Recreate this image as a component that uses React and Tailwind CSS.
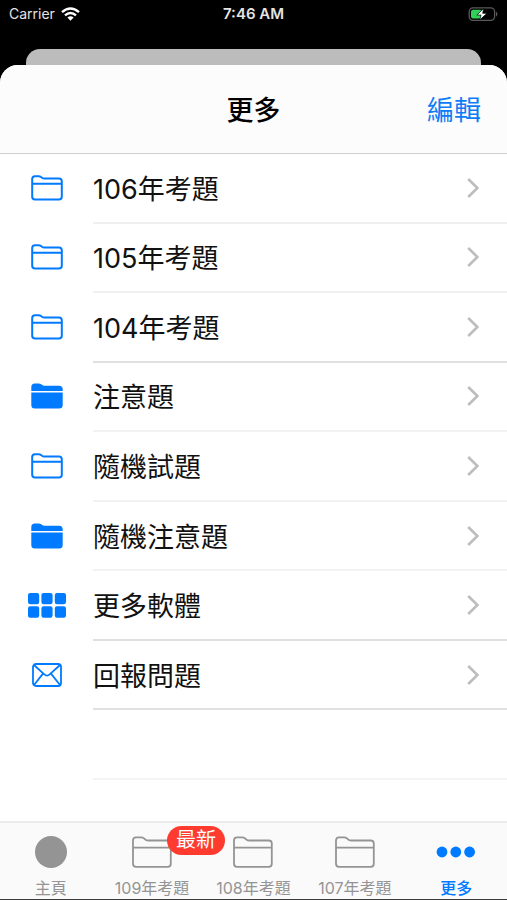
import React, { useState } from 'react';

const items = [
  { label: '106年考題', icon: 'folder', line: 'border-[#f0f0f0]' },
  { label: '105年考題', icon: 'folder', line: 'border-[#f0f0f0]' },
  { label: '104年考題', icon: 'folder', line: 'border-[#e0e0e0]' },
  { label: '注意題', icon: 'filled', line: 'border-[#f2f2f2]' },
  { label: '隨機試題', icon: 'folder', line: 'border-[#f2f2f2]' },
  { label: '隨機注意題', icon: 'filled', line: 'border-[#f2f2f2]' },
  { label: '更多軟體', icon: 'grid', line: 'border-[#e0e0e0]' },
  { label: '回報問題', icon: 'mail', line: 'border-[#e0e0e0]' },
];

const tabs = [
  { label: '主頁', icon: 'circle' },
  { label: '109年考題', icon: 'folder', badge: '最新' },
  { label: '108年考題', icon: 'folder' },
  { label: '107年考題', icon: 'folder' },
  { label: '更多', icon: 'dots' },
];

function FolderIcon({ className }) {
  return (
    <svg viewBox="0 0 32 26" fill="none" stroke="currentColor" strokeWidth="2" strokeLinejoin="round" className={className}>
      <path d="M1.2 8.8V4Q1.2 1.2 4 1.2H7.6Q9 1.2 10 2L11 2.8Q12 3.5 13.2 3.5H28Q30.8 3.5 30.8 6.3V21.8Q30.8 24.6 28 24.6H4Q1.2 24.6 1.2 21.8V8.8H30.8" />
    </svg>
  );
}

function FilledFolderIcon({ className }) {
  return (
    <svg viewBox="0 0 32 26" fill="currentColor" className={className}>
      <path d="M.3 8V4Q.3.5 3.8.5H7.6Q9.2.5 10.2 1.3L11.2 2.1Q12 2.7 13.2 2.7H28.2Q31.6 2.7 31.7 6.2V8Z" />
      <path d="M.3 9.4H31.7V22Q31.7 25.5 28.2 25.5H3.8Q.3 25.5.3 22Z" />
    </svg>
  );
}

function TabFolderIcon() {
  return (
    <svg viewBox="0 0 40 32" fill="none" stroke="currentColor" strokeWidth="1.8" strokeLinejoin="round" className="h-8 w-10">
      <path d="M1 11.6V4.4Q1 1.4 4 1.4H9Q10.8 1.4 12 2.4L13.6 3.7Q14.8 4.5 16.4 4.5H35.8Q38.8 4.5 38.8 7.5V27.8Q38.8 30.8 35.8 30.8H4Q1 30.8 1 27.8V11.6H38.8" />
    </svg>
  );
}

function GridIcon() {
  return (
    <svg viewBox="0 0 38 26" fill="currentColor" className="h-[26px] w-[38px]">
      {[0, 13.4, 26.8].map((x) => (
        <React.Fragment key={x}>
          <rect x={x} y="0.9" width="11.2" height="11.4" rx="2.2" />
          <rect x={x} y="14.3" width="11.2" height="11.4" rx="2.2" />
        </React.Fragment>
      ))}
    </svg>
  );
}

function MailIcon() {
  return (
    <svg viewBox="0 0 30 24" fill="none" stroke="currentColor" strokeWidth="1.8" className="h-6 w-[30px]">
      <rect x="1" y="1" width="28" height="22" rx="3" />
      <path d="M2 2L12.3 11.4Q15 13.8 17.7 11.4L28 2M2 22L11 10.6M28 22L19 10.6" />
    </svg>
  );
}

function RowIcon({ type }) {
  if (type === 'filled') return <FilledFolderIcon className="h-[26px] w-8" />;
  if (type === 'grid') return <GridIcon />;
  if (type === 'mail') return <MailIcon />;
  return <FolderIcon className="h-[26px] w-8" />;
}

function TabIcon({ type }) {
  if (type === 'circle') return <span className="size-8 rounded-full bg-[#949494]" />;
  if (type === 'dots') {
    return (
      <svg viewBox="0 0 40 32" fill="currentColor" className="h-8 w-10">
        <circle cx="6" cy="16" r="5.4" />
        <circle cx="19.8" cy="16" r="5.4" />
        <circle cx="33.6" cy="16" r="5.4" />
      </svg>
    );
  }
  return <TabFolderIcon />;
}

function StatusBar() {
  return (
    <div className="grid h-7 grid-cols-3 items-center px-[9px] font-['Inter','Liberation_Sans',sans-serif] leading-5 text-[#e4e4e4]">
      <div className="flex items-center gap-1.5 text-[14px]">
        <span>Carrier</span>
        <svg viewBox="0 0 19 14" fill="none" stroke="#fff" strokeWidth="2.4" className="h-3.5 w-[19px]">
          <path d="M1 5.2Q9.5-2.4 18 5.2" />
          <path d="M4 8.4Q9.5 3.6 15 8.4" />
          <path d="M6.4 10.6Q9.5 8 12.6 10.6L9.5 13.8Z" fill="#fff" stroke="none" />
        </svg>
      </div>
      <span className="text-center text-[15px] font-semibold">7:46 AM</span>
      <svg viewBox="0 0 30 15" className="h-[15px] w-[30px] justify-self-end">
        <rect x="1.2" y="0.8" width="25.4" height="12.6" rx="3.8" fill="none" stroke="#5a5a5a" strokeWidth="1.3" />
        <path d="M28 4.4Q31 7.1 28 9.8Z" fill="#5a5a5a" />
        <rect x="3" y="2.7" width="11" height="8.8" rx="2" fill="#30d158" />
        <path d="M15.8 1.4L8.8 8H13L11.8 12.8L19 6.3H14.7Z" fill="#fff" stroke="#000" strokeWidth="0.7" />
      </svg>
    </div>
  );
}

export default function App() {
  const [active, setActive] = useState('更多');

  return (
    <div className="flex min-h-screen flex-col bg-black font-['Inter','Noto_Sans_CJK_TC',sans-serif]">
      <StatusBar />
      {/* Card behind the sheet */}
      <div className="mx-[26px] mt-[21px] h-4 rounded-t-[14px] bg-[#bcbcbc]" />

      <div className="flex flex-1 flex-col overflow-hidden rounded-t-[18px] bg-white">
        <header className="grid h-[89px] grid-cols-3 items-center border-b border-[#cfcfcf] bg-[#fcfcfc] px-[26px] pt-1">
          <h1 className="col-start-2 text-center text-[27px] leading-9 font-medium text-black">更多</h1>
          <button className="justify-self-end text-[27px] leading-9 text-[#0f7cf5]">編輯</button>
        </header>

        <ul className="grid flex-1 auto-rows-fr pb-[41px]">
          {items.map((item) => (
            <li key={item.label} className="flex">
              <button className="flex flex-1 text-left">
                <span className="flex w-[93px] items-center justify-center self-stretch pb-0.5 text-[#007aff]">
                  <RowIcon type={item.icon} />
                </span>
                <span className={`flex flex-1 items-center justify-between self-stretch border-b-2 pr-7 ${item.line}`}>
                  <span className="pt-1 text-[27px] leading-9 text-[#111]">{item.label}</span>
                  <svg viewBox="0 0 12 20" fill="none" stroke="#bdbdbd" strokeWidth="2.6" className="h-5 w-3">
                    <path d="M1.2 1L10.4 10L1.2 19" />
                  </svg>
                </span>
              </button>
            </li>
          ))}
          <li className="ml-[93px] border-b-2 border-[#f4f4f4]" />
        </ul>

        <nav className="grid grid-cols-5 border-t-2 border-b border-t-[#ececec] border-b-[#3a3a3a] bg-[#fafafa] pt-[13px] pb-px">
          {tabs.map((tab) => (
            <button
              key={tab.label}
              onClick={() => setActive(tab.label)}
              className={`flex flex-col items-center gap-2.5 ${active === tab.label ? 'font-medium text-[#007aff]' : 'text-[#949494]'}`}
            >
              <span className="relative flex">
                <TabIcon type={tab.icon} />
                {tab.badge && (
                  <span className="absolute -top-2.5 left-[35px] rounded-full bg-[#ff3b30] px-[9px] text-[20px] leading-[29px] whitespace-nowrap text-white">
                    {tab.badge}
                  </span>
                )}
              </span>
              <span className="text-[16px] leading-5 whitespace-nowrap">{tab.label}</span>
            </button>
          ))}
        </nav>
      </div>
    </div>
  );
}
